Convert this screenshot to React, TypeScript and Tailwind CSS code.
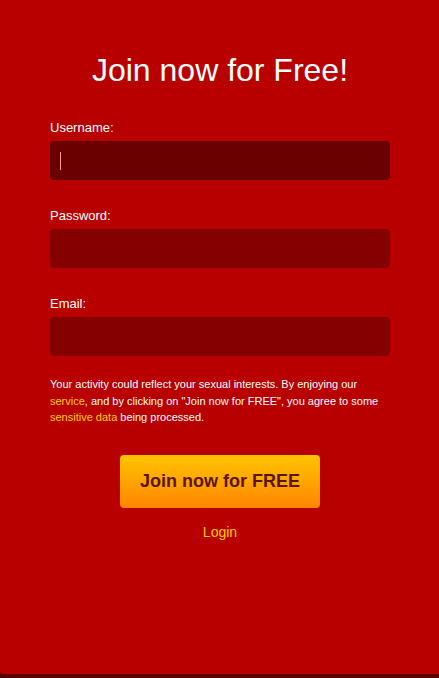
import React from "react";

export default function App() {
  return (
    <div className="w-[439px] h-[678px] bg-[#5c0000] overflow-hidden" style={{ fontFamily: '"Liberation Sans", Arial, sans-serif' }}>
      <div className="h-[674px] bg-[#b80000] rounded-bl-[4px] pl-[50px] pr-[49px] pt-[51px] flex flex-col">
        <h1 className="text-white text-[32px] leading-[38px] text-center">Join now for Free!</h1>
        <div className="mt-[31px] flex flex-col">
          <label className="text-white text-[13px] leading-[16px]">Username:</label>
          <div className="mt-[5px] h-[39px] rounded-[4px] bg-[#6b0000] flex items-center px-[10px]">
            <div className="w-px h-[18px] bg-[#ff9a9a]" />
          </div>
          <label className="mt-[28px] text-white text-[13px] leading-[16px]">Password:</label>
          <div className="mt-[5px] h-[39px] rounded-[4px] bg-[#850000]" />
          <label className="mt-[28px] text-white text-[13px] leading-[16px]">Email:</label>
          <div className="mt-[5px] h-[39px] rounded-[4px] bg-[#850000]" />
        </div>
        <p className="mt-[20px] text-white text-[11px] leading-[16.5px]">
          Your activity could reflect your sexual interests. By enjoying our{" "}
          <span className="text-[#ffcc00]">service</span>, and by clicking on "Join now for FREE", you agree to some{" "}
          <span className="text-[#ffcc00]">sensitive data</span> being processed.
        </p>
        <div className="mt-[29px] flex justify-center">
          <button className="w-[200px] h-[53px] rounded-[4px] bg-gradient-to-b from-[#ffc400] to-[#ff8400] text-[#5a1500] font-bold text-[18px]">
            Join now for FREE
          </button>
        </div>
        <div className="mt-[15px] text-center text-[#ffcc00] text-[14px] leading-[18px]">Login</div>
      </div>
    </div>
  );
}
